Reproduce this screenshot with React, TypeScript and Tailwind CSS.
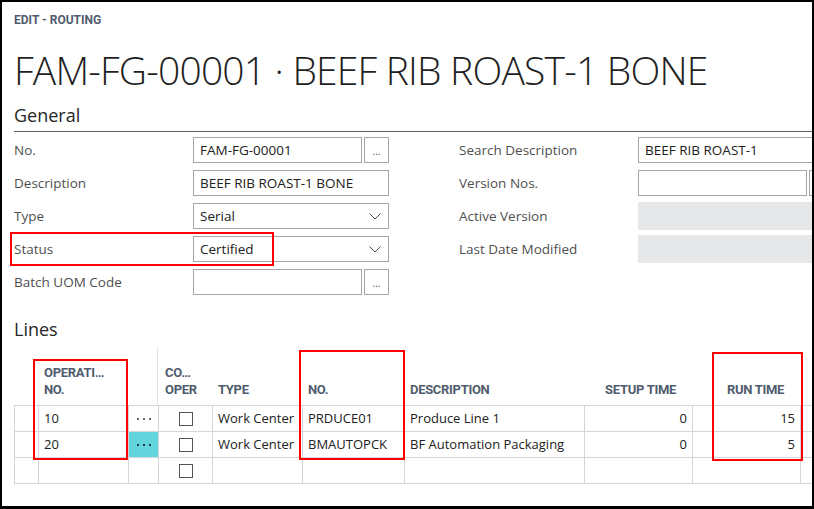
import React from 'react';

const label = "w-[179px] shrink-0 text-[13.5px] text-[#4f4f4f] leading-[26px] whitespace-nowrap";
const box = "h-[26px] shrink-0 border border-[#a6a6a6] bg-white px-[6px] text-[13.5px] leading-[24px] text-[#212121] whitespace-nowrap overflow-hidden";

function Chevron() {
  return (
    <svg width="12" height="7" viewBox="0 0 12 7" className="shrink-0">
      <polyline points="0.5,0.5 6,6 11.5,0.5" fill="none" stroke="#505050" strokeWidth="1" />
    </svg>
  );
}

function LookupButton() {
  return (
    <div className="ml-[2px] flex h-[26px] w-[25px] shrink-0 items-end justify-center border border-[#a6a6a6] bg-white pb-[6px] text-[10px] leading-none text-[#505050]">
      ...
    </div>
  );
}

function Select({ value }: { value: string }) {
  return (
    <div className={box + " flex w-[196px] items-center justify-between pr-[7px]"}>
      <span>{value}</span>
      <Chevron />
    </div>
  );
}

function Row({ children, text }: { children: React.ReactNode; text: string }) {
  return (
    <div className="flex h-[26px] items-center">
      <div className={label}>{text}</div>
      {children}
    </div>
  );
}

function Dots({ dark }: { dark?: boolean }) {
  const c = dark ? 'bg-[#2b3b45]' : 'bg-[#666]';
  return (
    <div className="flex gap-[4px]">
      <span className={`h-[2px] w-[2px] ${c}`} />
      <span className={`h-[2px] w-[2px] ${c}`} />
      <span className={`h-[2px] w-[2px] ${c}`} />
    </div>
  );
}

function Check() {
  return <span className="block h-[14px] w-[14px] border border-[#555] bg-white" />;
}

const grid = "grid grid-cols-[24px_90px_30px_54px_90px_102px_180px_108px_108px_1fr]";
const th = "overflow-hidden whitespace-nowrap pl-[6px] pr-[16px] pb-[7px] font-['Roboto',sans-serif] text-[13px] font-bold leading-[17px] tracking-[-0.3px] text-[#505c6d]";
const td = "flex h-[25px] items-center overflow-hidden whitespace-nowrap border-l border-[#d4d4da] px-[5px] text-[13px] text-[#212121]";

const lines = [
  { op: '10', type: 'Work Center', no: 'PRDUCE01', desc: 'Produce Line 1', setup: '0', run: '15', active: false },
  { op: '20', type: 'Work Center', no: 'BMAUTOPCK', desc: 'BF Automation Packaging', setup: '0', run: '5', active: true },
  { op: '', type: '', no: '', desc: '', setup: '', run: '', active: false },
];

export default function App() {
  return (
    <div className="relative h-[509px] w-[814px] overflow-hidden border-2 border-b-[3px] border-black bg-white font-['Open_Sans',sans-serif] text-[#212121]">
      <div className="pl-3">
        <div className="pt-[10px] font-['Roboto',sans-serif] text-[12px] font-bold leading-4 text-[#505c6d]">
          EDIT - ROUTING
        </div>
        <h1 className="mt-[18px] h-[48px] whitespace-nowrap text-[39px] font-light leading-[48px] tracking-[-0.8px] text-[#1f1f1f]">
          FAM-FG-00001 · BEEF RIB ROAST-1 BONE
        </h1>
        <div className="mt-[9px] border-b border-[#59606b] pb-[4px] text-[18px] leading-6 text-[#262626]">General</div>

        {/* General fields */}
        <div className="mt-[5px] flex">
          <div className="flex w-[375px] shrink-0 flex-col gap-[7px]">
            <Row text="No.">
              <div className={box + " w-[169px]"}>FAM-FG-00001</div>
              <LookupButton />
            </Row>
            <Row text="Description">
              <div className={box + " w-[196px]"}>BEEF RIB ROAST-1 BONE</div>
            </Row>
            <Row text="Type">
              <Select value="Serial" />
            </Row>
            <Row text="Status">
              <Select value="Certified" />
            </Row>
            <Row text="Batch UOM Code">
              <div className={box + " w-[169px]"} />
              <LookupButton />
            </Row>
          </div>
          <div className="ml-[70px] flex shrink-0 flex-col gap-[7px]">
            <Row text="Search Description">
              <div className={box + " w-[196px]"}>BEEF RIB ROAST-1</div>
            </Row>
            <Row text="Version Nos.">
              <div className={box + " w-[169px]"} />
              <div className="ml-[2px] h-[26px] w-[25px] shrink-0 border border-[#a6a6a6] bg-white" />
            </Row>
            <Row text="Active Version">
              <div className="h-[28px] w-[196px] shrink-0 bg-[#e6e7e8]" />
            </Row>
            <Row text="Last Date Modified">
              <div className="h-[28px] w-[196px] shrink-0 bg-[#e6e7e8]" />
            </Row>
          </div>
        </div>

        {/* Lines */}
        <div className="mt-[22px] text-[18px] leading-6 text-[#262626]">Lines</div>
        <div className="mt-[6px]">
          <div className={grid + " h-[58px] items-end"}>
            <div />
            <div className={th}>
              <div>OPERATI…</div>
              <div>NO.</div>
            </div>
            <div className="h-full border-r border-[#e4e4e8]" />
            <div className={th + " pl-[7px] pr-[18px]"}>
              <div>CO…</div>
              <div>OPER</div>
            </div>
            <div className={th}>TYPE</div>
            <div className={th}>NO.</div>
            <div className={th}>DESCRIPTION</div>
            <div className={th + " text-right"}>SETUP TIME</div>
            <div className={th + " text-right"}>RUN TIME</div>
            <div />
          </div>
          <div className="border-t border-[#d4d4da]">
            {lines.map((l, i) => (
              <div key={i} className={grid + " border-b border-[#d4d4da]"}>
                <div className={td} />
                <div className={td}>{l.op}</div>
                <div className={td + " justify-center px-0 " + (l.active ? 'bg-[#62d4dc]' : '')}>
                  {l.op && <Dots dark={l.active} />}
                </div>
                <div className={td + " justify-center"}>
                  <Check />
                </div>
                <div className={td}>{l.type}</div>
                <div className={td}>{l.no}</div>
                <div className={td}>{l.desc}</div>
                <div className={td + " justify-end px-[4px]"}>{l.setup}</div>
                <div className={td + " justify-end px-[4px]"}>{l.run}</div>
                <div className={td} />
              </div>
            ))}
          </div>
        </div>
      </div>

      {/* red annotation boxes */}
      <div className="pointer-events-none absolute left-[8px] top-[230px] h-[34px] w-[264px] border-2 border-[#ff0000]" />
      <div className="pointer-events-none absolute left-[31px] top-[357px] h-[101px] w-[95px] border-2 border-[#ff0000]" />
      <div className="pointer-events-none absolute left-[297px] top-[348px] h-[110px] w-[106px] border-2 border-[#ff0000]" />
      <div className="pointer-events-none absolute left-[710px] top-[350px] h-[109px] w-[91px] border-2 border-[#ff0000]" />
    </div>
  );
}
